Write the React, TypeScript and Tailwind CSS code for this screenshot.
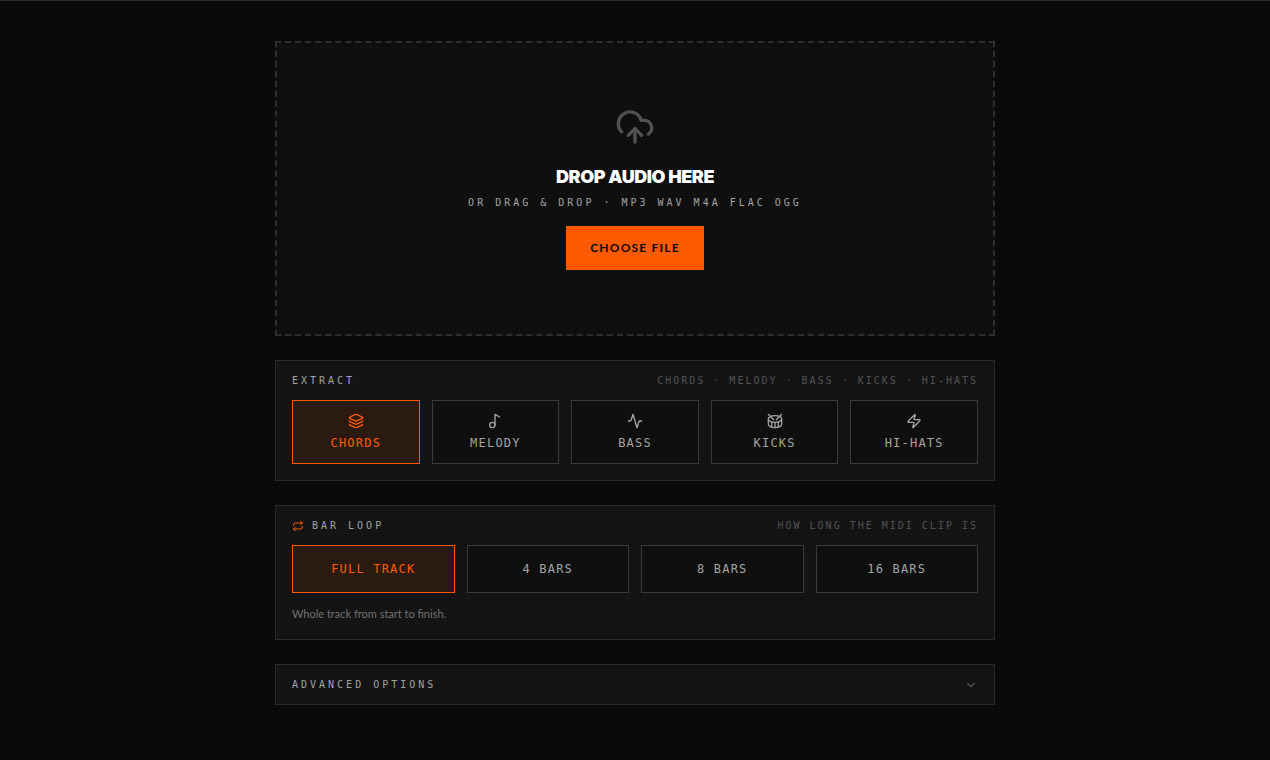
import { useState } from "react";
import {
  Activity,
  ChevronDown,
  CloudUpload,
  Drum,
  Layers,
  Music2,
  Repeat,
  Zap,
} from "lucide-react";

const targets = [
  { id: "chords", label: "Chords", icon: Layers },
  { id: "melody", label: "Melody", icon: Music2 },
  { id: "bass", label: "Bass", icon: Activity },
  { id: "kicks", label: "Kicks", icon: Drum },
  { id: "hihats", label: "Hi-Hats", icon: Zap },
];

const loops = [
  { id: "full", label: "Full track", note: "Whole track from start to finish." },
  { id: "4", label: "4 bars", note: "A loop of 4 bars." },
  { id: "8", label: "8 bars", note: "A loop of 8 bars." },
  { id: "16", label: "16 bars", note: "A loop of 16 bars." },
];

const optionBase =
  "flex flex-col items-center justify-center border text-xs tracking-widest uppercase font-['DejaVu_Sans_Mono',monospace]";
const optionOn = "border-[#ff5a00] bg-[#2b1a12] text-[#ff5a00]";
const optionOff = "border-[#3a3a3a] bg-[#0f0f0f] text-[#a3a3a3]";

const labelText =
  "text-[10px] leading-[15px] tracking-[3px] uppercase text-[#a3a3a3] font-['DejaVu_Sans_Mono',monospace]";
const hintText =
  "text-[10px] leading-[15px] tracking-[2px] uppercase text-[#525252] font-['DejaVu_Sans_Mono',monospace]";

function DropZone() {
  return (
    <section className="flex flex-col items-center border-2 border-dashed border-[#2e2e2e] bg-[#0f0f0f] px-4 py-16 text-center">
      <CloudUpload className="size-10 text-[#525252]" />
      <h2 className="mt-4 font-['Inter',sans-serif] text-lg leading-7 font-black tracking-tight text-white uppercase">
        Drop audio here
      </h2>
      <p className={`${labelText} mt-1`}>
        or drag &amp; drop · mp3 wav m4a flac ogg
      </p>
      <button
        type="button"
        className="mt-4 h-11 bg-[#ff5a00] px-6 text-xs font-bold tracking-widest text-[#0a0a0a] uppercase"
      >
        Choose file
      </button>
    </section>
  );
}

function ExtractPanel() {
  const [target, setTarget] = useState("chords");

  return (
    <section className="border border-[#2a2a2a] bg-[#141414] px-4 pt-3 pb-4">
      <div className="mb-3 flex items-center justify-between">
        <h3 className={labelText}>Extract</h3>
        <span className={hintText}>
          Chords · Melody · Bass · Kicks · Hi-Hats
        </span>
      </div>
      <div className="grid grid-cols-5 gap-3">
        {targets.map(({ id, label, icon: Icon }) => (
          <button
            key={id}
            type="button"
            aria-pressed={target === id}
            onClick={() => setTarget(id)}
            className={`${optionBase} gap-1.5 py-3 ${target === id ? optionOn : optionOff}`}
          >
            <Icon className="size-4" />
            {label}
          </button>
        ))}
      </div>
    </section>
  );
}

function LoopPanel() {
  const [loop, setLoop] = useState("full");
  const selected = loops.find((item) => item.id === loop);

  return (
    <section className="border border-[#2a2a2a] bg-[#141414] px-4 pt-3 pb-4">
      <div className="mb-3 flex items-center justify-between">
        <div className="flex items-center gap-2">
          <Repeat className="size-3 text-[#ff5a00]" />
          <h3 className={labelText}>Bar loop</h3>
        </div>
        <span className={hintText}>How long the MIDI clip is</span>
      </div>
      <div className="grid grid-cols-4 gap-3">
        {loops.map(({ id, label }) => (
          <button
            key={id}
            type="button"
            aria-pressed={loop === id}
            onClick={() => setLoop(id)}
            className={`${optionBase} h-12 ${loop === id ? optionOn : optionOff}`}
          >
            {label}
          </button>
        ))}
      </div>
      <p className="mt-3 text-[11px] leading-[18px] text-[#737373]">
        {selected?.note}
      </p>
    </section>
  );
}

function App() {
  return (
    <div className="min-h-screen border-t border-[#2e2e2e] bg-[#0a0a0a] font-['Lato',sans-serif]">
      <main className="mx-auto flex max-w-[720px] flex-col gap-6 py-10">
        <DropZone />
        <ExtractPanel />
        <LoopPanel />
        <button
          type="button"
          className="flex items-center justify-between border border-[#2a2a2a] bg-[#141414] px-4 py-3"
        >
          <span className={labelText}>Advanced options</span>
          <ChevronDown className="size-3.5 text-[#525252]" />
        </button>
      </main>
    </div>
  );
}

export default App;
